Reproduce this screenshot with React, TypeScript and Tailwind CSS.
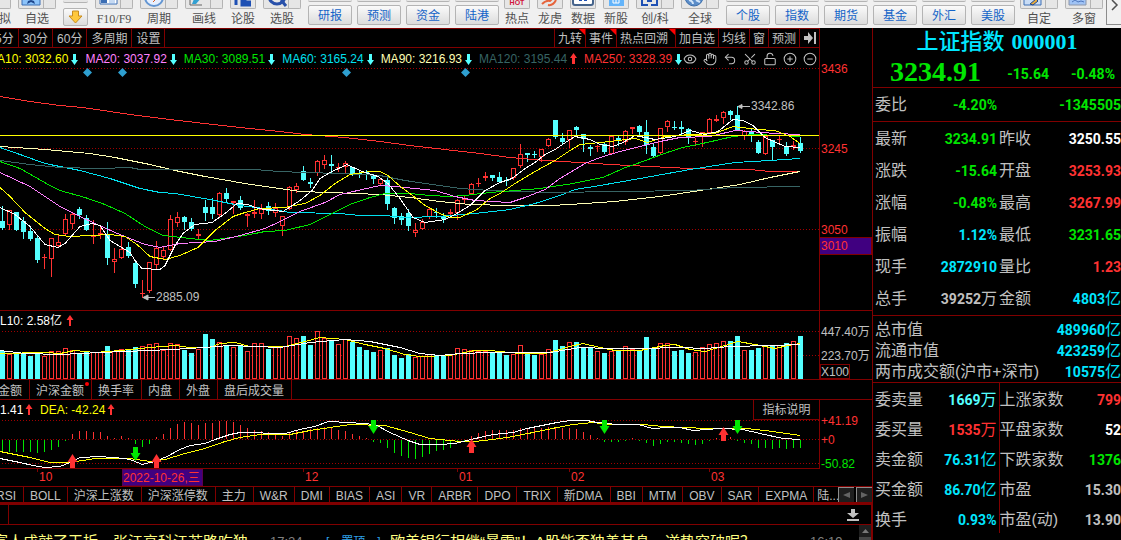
import React from 'react';
import { CircleMinus, CirclePlus, Eye, Hand, LockOpen, Scissors, Undo2 } from 'lucide-react';

const RED = '#ff3232';
const CYAN = '#54ffff';
const GREEN = '#00e600';
const LINE = '#800000';

// u = up (hollow red), d = down (solid cyan); then high, top, bottom, low
type Candle = ['u' | 'd', number, number, number, number];

const candles: Candle[] = [
  ['d', 206, 221, 228, 229], ['u', 210, 210, 225, 229], ['d', 212, 212, 230, 230], ['d', 217, 221, 232, 238],
  ['d', 226, 231, 239, 240], ['d', 236, 238, 260, 262], ['u', 254, 257, 258, 268], ['u', 238, 238, 259, 276],
  ['u', 234, 242, 246, 247], ['u', 214, 219, 234, 234], ['u', 212, 214, 224, 228], ['d', 207, 209, 215, 218],
  ['d', 215, 218, 230, 230], ['u', 220, 235, 237, 243], ['u', 225, 233, 235, 238], ['d', 222, 234, 258, 264],
  ['u', 248, 259, 262, 272], ['u', 237, 249, 258, 258], ['d', 242, 247, 256, 257], ['d', 260, 263, 284, 287],
  ['u', 280, 293, 294, 297], ['u', 262, 262, 291, 292], ['u', 241, 248, 265, 268], ['u', 247, 250, 257, 258],
  ['u', 215, 219, 250, 250], ['u', 212, 217, 223, 226], ['d', 216, 217, 222, 229], ['d', 218, 222, 229, 230],
  ['u', 229, 234, 236, 239], ['d', 200, 207, 213, 220], ['d', 198, 207, 214, 218], ['u', 192, 193, 215, 217],
  ['d', 188, 193, 199, 201], ['u', 201, 201, 203, 213], ['d', 196, 200, 208, 209], ['u', 213, 214, 216, 226],
  ['u', 200, 212, 214, 217], ['u', 204, 209, 214, 218], ['d', 202, 206, 211, 214], ['u', 203, 208, 213, 216],
  ['u', 216, 216, 226, 235], ['u', 186, 187, 209, 209], ['u', 183, 186, 190, 192], ['d', 166, 171, 180, 180],
  ['d', 178, 182, 184, 187], ['u', 160, 161, 173, 175], ['u', 155, 160, 165, 168], ['d', 155, 164, 166, 172],
  ['u', 163, 167, 168, 171], ['u', 161, 163, 167, 173], ['d', 167, 167, 175, 175], ['d', 171, 173, 174, 177],
  ['d', 170, 172, 173, 179], ['d', 174, 175, 179, 183], ['u', 178, 179, 184, 185], ['d', 178, 180, 204, 209],
  ['d', 207, 208, 218, 223], ['d', 213, 216, 220, 224], ['d', 209, 213, 226, 230], ['u', 223, 230, 233, 236],
  ['u', 219, 222, 229, 229], ['u', 208, 209, 217, 218], ['d', 208, 212, 213, 217], ['d', 213, 217, 219, 222],
  ['u', 209, 212, 214, 215], ['u', 199, 200, 213, 219], ['u', 196, 198, 200, 203], ['u', 183, 184, 194, 194],
  ['u', 178, 183, 184, 186], ['u', 172, 176, 178, 180], ['d', 175, 175, 178, 180], ['d', 172, 177, 182, 182],
  ['d', 177, 180, 181, 185], ['u', 168, 168, 178, 179], ['u', 144, 154, 166, 167], ['d', 153, 153, 155, 161],
  ['d', 151, 154, 155, 157], ['u', 149, 149, 157, 161], ['u', 138, 139, 146, 146], ['d', 120, 120, 137, 138],
  ['d', 133, 138, 142, 144], ['u', 130, 130, 140, 147], ['d', 126, 127, 130, 135], ['d', 134, 134, 139, 151],
  ['d', 145, 147, 149, 155], ['u', 145, 146, 147, 151], ['d', 143, 144, 152, 153], ['u', 136, 136, 154, 154],
  ['d', 136, 138, 140, 145], ['u', 130, 131, 142, 144], ['u', 127, 127, 129, 133], ['d', 125, 126, 132, 135],
  ['d', 120, 132, 145, 153], ['d', 143, 147, 156, 156], ['u', 128, 128, 153, 154], ['u', 120, 121, 127, 131],
  ['d', 121, 127, 128, 129], ['d', 121, 127, 129, 134], ['d', 128, 129, 138, 143], ['u', 138, 141, 142, 145],
  ['u', 132, 132, 137, 146], ['u', 118, 119, 133, 133], ['u', 115, 119, 121, 121], ['u', 111, 112, 118, 123],
  ['d', 110, 111, 115, 119], ['d', 106, 115, 130, 130], ['u', 130, 131, 136, 139], ['d', 128, 131, 134, 141],
  ['d', 140, 142, 153, 153], ['u', 136, 136, 154, 154], ['d', 140, 140, 147, 159], ['u', 136, 139, 140, 144],
  ['d', 142, 147, 154, 155], ['u', 141, 145, 147, 149], ['d', 137, 143, 151, 152],
];

const volumes = [
  28, 25, 26, 26, 23, 27, 23, 28, 28, 31, 29, 26, 27, 27, 27, 33, 28, 30, 29, 32, 33, 35, 36, 29, 36, 35, 29, 26, 30, 45,
  40, 37, 33, 32, 34, 28, 36, 36, 30, 33, 33, 43, 41, 43, 34, 48, 41, 39, 35, 40, 37, 32, 29, 27, 29, 31, 24, 21, 25, 22,
  23, 25, 24, 23, 24, 31, 30, 29, 28, 28, 27, 27, 24, 25, 34, 25, 24, 25, 30, 39, 33, 37, 37, 31, 31, 28, 26, 28, 29, 33,
  30, 29, 42, 30, 36, 36, 28, 29, 26, 27, 32, 35, 36, 38, 38, 43, 29, 29, 31, 33, 34, 34, 36, 38, 43,
];

const macd = [
  -13, -12, -12, -12, -12, -13, -12, -10, -7, 0, 5, 8, 8, 7, 7, 3, 1, 3, 1, -4, -7, -4, 2, 5, 11, 15, 17, 16, 14, 16,
  16, 18, 18, 17, 14, 11, 9, 8, 7, 4, 3, 6, 8, 8, 10, 11, 12, 12, 9, 8, 5, 3, 1, -2, -3, -8, -13, -16, -18, -19,
  -17, -14, -11, -10, -8, -3, 0, 3, 6, 8, 9, 9, 9, 9, 11, 11, 11, 11, 12, 11, 11, 11, 10, 7, 4, 1, -2, -2, -2, 0,
  1, 0, -3, -6, -4, -2, -2, -3, -4, -5, -4, 0, 1, 2, 2, 0, -3, -4, -8, -8, -9, -8, -9, -8, -8,
];

const averages = [
  { color: '#ff3232', points: '0,96 30,101 60,105 83,107 130,114 170,119 213,124 250,128 280,131 305,134 345,137 380,141 410,145 445,149 480,153 510,157 545,160 580,162 610,164 650,166 690,168 720,169 750,169 770,171 800,171' },
  { color: '#ffffb4', points: '0,146 45,149 90,153 115,157 150,164 175,170 205,176 245,183 279,188 300,191 330,192 380,194 410,197 440,201 470,204 510,205 550,205 570,204 615,201 660,196 700,190 740,184 770,177 800,171' },
  { color: '#00e1f0', points: '0,147 20,154 45,163 65,167 80,170 110,178 140,188 160,192 175,193 210,199 240,205 279,210 290,212 340,213 360,215 385,215 405,217 440,216 475,213 510,209 535,203 560,195 575,189 600,185 640,178 690,169 735,162 770,160 800,158' },
  { color: '#376464', points: '0,160 30,164 60,167 100,168 130,167 140,169 255,169 279,171 305,172 340,173 380,175 405,180 460,188 490,190 550,192 620,191 690,190 735,187 800,186' },
  { color: '#00e600', points: '0,161 20,168 50,185 60,190 85,197 105,204 125,213 145,226 163,235 190,238 210,240 245,235 265,231 285,230 310,224 330,214 350,204 370,197 385,193 410,193 430,195 450,196 465,195 490,192 540,188 573,183 603,177 623,168 640,162 667,152 683,147 707,142 733,136 753,134 780,135 800,136' },
  { color: '#ff80ff', points: '0,172 30,186 60,206 80,216 95,223 115,232 135,240 145,244 160,247 180,243 215,241 240,235 265,228 280,221 300,211 325,202 340,194 380,185 395,186 435,190 455,196 475,200 510,202 525,197 545,189 560,178 585,163 600,157 620,151 640,146 660,141 680,137 710,136 735,130 750,131 775,133 800,134' },
  { color: '#ffff00', points: '0,187 10,196 25,212 45,228 55,234 70,236 110,234 125,236 137,244 150,256 165,259 180,255 198,247 215,230 233,216 245,212 260,208 285,207 305,203 320,195 335,183 350,174 370,171 380,171 388,175 398,184 410,193 425,205 440,213 450,217 460,217 477,209 490,198 500,193 515,183 535,171 555,160 570,150 580,144 610,141 635,138 648,142 665,136 690,134 715,133 733,126 750,128 757,129 775,130 790,136 800,143' },
  { color: '#ffffff', points: '0,207 15,214 30,226 45,244 58,247 65,243 80,226 92,223 100,225 110,240 120,246 130,252 135,260 142,268 160,269 165,265 175,245 183,233 195,224 212,222 225,213 237,203 248,204 258,208 283,211 300,200 312,190 320,178 330,172 347,164 362,171 378,176 388,183 400,198 413,217 425,222 445,219 455,214 470,205 485,190 500,182 512,178 525,168 535,162 545,154 555,149 570,139 575,136 590,139 600,144 613,146 623,142 635,135 655,139 675,136 690,130 705,134 718,131 733,119 743,120 753,125 765,137 785,146 800,147' },
];

const volumeAverages = [
  { color: '#ffff00', points: '0,353 45,352 60,353 75,350 95,352 120,350 150,347 175,345 190,347 210,347 220,343 235,342 250,346 285,346 305,341 320,337 345,339 365,344 385,348 405,354 420,356 450,355 475,350 490,350 520,353 545,353 560,349 570,346 583,343 600,347 615,350 640,350 665,345 675,344 690,349 705,351 725,345 738,341 755,344 775,348 788,345 800,343' },
  { color: '#ffffff', points: '0,350 25,353 60,354 100,352 150,350 190,348 230,345 280,347 310,342 345,339 370,341 400,347 420,353 440,355 460,353 490,352 550,352 580,347 610,348 640,348 680,347 705,348 730,346 770,345 800,344' },
];

const macdLines = [
  { color: '#ffff00', points: '0,451 30,457 50,462 70,462 95,458 130,458 150,461 165,459 185,453 205,448 225,441 240,437 260,434 290,434 310,430 350,424 385,425 410,432 430,438 460,441 475,441 493,439 513,436 533,432 557,427 573,424 593,422 610,424 643,424 663,426 707,428 747,428 773,431 800,435' },
  { color: '#ffffff', points: '0,458 20,462 33,465 45,467 60,466 70,462 80,457 100,456 125,458 133,460 142,464 155,461 167,456 180,449 190,445 205,443 215,439 230,434 240,432 285,433 300,429 315,426 328,421 350,422 375,424 390,432 408,440 420,444 440,444 455,443 471,439 493,434 513,432 527,428 547,424 557,422 570,420 587,420 597,422 617,424 638,424 653,428 667,427 680,427 693,430 720,428 743,429 760,433 783,438 800,439' },
];

const legend = [
  { label: 'MA10: 3032.60', tone: 'text-[#ffff00]', up: false },
  { label: 'MA20: 3037.92', tone: 'text-[#ff80ff]', up: false },
  { label: 'MA30: 3089.51', tone: 'text-[#00e600]', up: false },
  { label: 'MA60: 3165.24', tone: 'text-[#00e1f0]', up: false },
  { label: 'MA90: 3216.93', tone: 'text-[#ffffb4]', up: false },
  { label: 'MA120: 3195.44', tone: 'text-[#376464]', up: true },
  { label: 'MA250: 3328.39', tone: 'text-[#ff3232]', up: false },
];

const indicators = [
  'BOLL', '沪深上涨数', '沪深涨停数', '主力', 'W&R', 'DMI', 'BIAS', 'ASI', 'VR', 'ARBR', 'DPO', 'TRIX', '新DMA', 'BBI',
  'MTM', 'OBV', 'SAR', 'EXPMA',
];

const green = 'text-[#00e600]';
const red = 'text-[#ff3232]';
const cyan = 'text-[#00e6ff]';
const gray = 'text-[#c0c0c0]';

const quoteRows = [
  ['最新', '3234.91', green, '昨收', '3250.55', 'text-white'],
  ['涨跌', '-15.64', green, '开盘', '3253.93', red],
  ['涨幅', '-0.48%', green, '最高', '3267.99', red],
  ['振幅', '1.12%', cyan, '最低', '3231.65', green],
  ['现手', '2872910', cyan, '量比', '1.23', red],
  ['总手', '39252万', gray, '金额', '4803亿', cyan],
];

const marketRows = [
  ['总市值', '489960亿'],
  ['流通市值', '423259亿'],
  ['两市成交额(沪市+深市)', '10575亿'],
];

const breadthRows = [
  ['委卖量', '1669万', 'text-[#54ffff]', '上涨家数', '799', red],
  ['委买量', '1535万', red, '平盘家数', '52', 'text-white'],
  ['卖金额', '76.31亿', cyan, '下跌家数', '1376', green],
  ['买金额', '86.70亿', cyan, '市盈', '15.30', gray],
  ['换手', '0.93%', cyan, '市盈(动)', '13.90', gray],
];

const candleX = (i: number) => 2 + i * 7;

function Arrow({ up }: { up: boolean }) {
  return (
    <svg width="7" height="12" viewBox="0 0 7 12" className="shrink-0">
      {up ? <path d="M3.500 0 7 5H5v6H2V5H0z" fill={RED} /> : <path d="M3.500 12 0 7h2V1h3v6h2z" fill={CYAN} />}
    </svg>
  );
}

function Dotted({ y }: { y: number }) {
  return <path d={`M2 ${y + 0.5}H819`} stroke="#a00000" strokeDasharray="1 2" />;
}

function Lines({ items }: { items: { color: string; points: string }[] }) {
  return (
    <g fill="none" transform="translate(0 .5)" shapeRendering="crispEdges">
      {items.map((line) => (
        <polyline key={line.color} points={line.points} stroke={line.color} />
      ))}
    </g>
  );
}

function PriceChart() {
  return (
    <svg viewBox="0 67 872 243" className="block h-auto w-full overflow-visible" fontSize="12">
      <g shapeRendering="crispEdges">
        <Dotted y={68} />
        <Dotted y={148} />
        <Dotted y={229} />
        <path d="M819.500 67V310" stroke={LINE} />
        {candles.map(([dir, high, top, bottom, low], i) => {
          const x = candleX(i);
          const h = bottom - top;
          if (dir === 'd') {
            return (
              <g key={i} fill={CYAN}>
                <rect x={x} y={high} width="1" height={low - high + 1} />
                <rect x={x - 2} y={top} width="5" height={h} />
              </g>
            );
          }
          return (
            <g key={i} fill={RED}>
              <rect x={x} y={high} width="1" height={top - high} />
              <rect x={x} y={bottom} width="1" height={low - bottom + 1} />
              {h < 3 ? (
                <rect x={x - 2} y={top} width="5" height={h} />
              ) : (
                <rect x={x - 1.5} y={top + 0.5} width="4" height={h - 1} fill="#000" stroke={RED} />
              )}
            </g>
          );
        })}
      </g>
      <Lines items={averages} />
      <g shapeRendering="crispEdges">
        <rect x="0" y="135" width="819" height="1" fill="#ffff00" />
        <rect x="819.500" y="237.500" width="52" height="17" fill="#400080" stroke={LINE} />
      </g>
      {[87, 122, 346, 465].map((x) => (
        <path key={x} d={`M${x + 0.5} 68l4.500 4.500-4.500 4.500-4.500-4.500z`} fill="#2e9fd0" />
      ))}
      <g stroke="#c0c0c0" fill="#c0c0c0">
        <path d="M144 297.500H155M148 295l-5 2.500 5 2.500z" />
        <path d="M739 106.500H750M742 104.500l-4 2 4 2z" />
      </g>
      <g fill="#c0c0c0">
        <text x="156" y="301">2885.09</text>
        <text x="751" y="110">3342.86</text>
      </g>
      <g fill={RED}>
        <text x="821" y="73">3436</text>
        <text x="821" y="153">3245</text>
        <text x="821" y="234">3050</text>
        <text x="821" y="250">3010</text>
      </g>
    </svg>
  );
}

function VolumeChart() {
  return (
    <svg viewBox="0 311 872 68" className="block h-auto w-full" fontSize="12">
      <g shapeRendering="crispEdges">
        <Dotted y={331} />
        <Dotted y={355} />
        <path d="M819.500 311V379" stroke={LINE} />
        {volumes.map((v, i) =>
          candles[i][0] === 'd' ? (
            <rect key={i} x={candleX(i) - 2} y={379 - v} width="5" height={v} fill={CYAN} />
          ) : (
            <rect key={i} x={candleX(i) - 1.5} y={379.5 - v} width="4" height={v - 1} fill="#000" stroke={RED} />
          ),
        )}
        <rect x="820.500" y="364.500" width="29" height="14" fill="none" stroke={LINE} />
      </g>
      <Lines items={volumeAverages} />
      <text x="0" y="325" fill="#fff">L10: 2.58亿</text>
      <path d="M70 315l3.500 5H71v6H69v-6H66.500z" fill={RED} />
      <g fill="#c0c0c0">
        <text x="821" y="336">447.40万</text>
        <text x="821" y="360">223.70万</text>
        <text x="821" y="376">X100</text>
      </g>
    </svg>
  );
}

function MacdChart() {
  const ups = [[72, 454], [156, 454], [471, 439], [723, 427]];
  const downs = [[135, 447], [373, 420], [604, 420], [737, 420]];
  const months: [number, string][] = [[37, '10'], [303, '12'], [457, '01'], [569, '02'], [709, '03']];

  return (
    <svg viewBox="0 400 872 86" className="block h-auto w-full" fontSize="12">
      <g shapeRendering="crispEdges">
        <Dotted y={420} />
        <Dotted y={439} />
        <Dotted y={463} />
        <path d="M819.500 400V468.500H0" fill="none" stroke={LINE} />
        {macd.map((v, i) => (
          <rect
            key={i}
            x={candleX(i)}
            y={v > 0 ? 439 - v : 440}
            width="1"
            height={Math.max(Math.abs(v), 1)}
            fill={v > 0 ? RED : GREEN}
          />
        ))}
        {months.map(([x]) => (
          <rect key={x} x={x} y="469" width="1" height="3" fill={LINE} />
        ))}
        <rect x="122.500" y="469.500" width="80" height="16" fill="#400080" stroke="#5a0050" />
      </g>
      <Lines items={macdLines} />
      {ups.map(([x, y]) => (
        <path key={x} d={`M${x + 0.5} ${y}l5 8h-2.500v6h-5v-6h-2.500z`} fill={RED} />
      ))}
      {downs.map(([x, y]) => (
        <path key={x} d={`M${x + 0.5} ${y + 14}l5-8h-2.500v-6h-5v6h-2.500z`} fill={GREEN} />
      ))}
      <text x="0" y="414" fill="#fff">1.41</text>
      <path d="M29 404l3.500 5H30v6H28v-6H25.500z" fill={RED} />
      <text x="40" y="414" fill="#ffff00">DEA: -42.24</text>
      <path d="M111 404l3.500 5H112v6H110v-6H107.500z" fill={RED} />
      <g fill={RED}>
        {months.map(([x, label]) => (
          <text key={x} x={x + 2} y="481">{label}</text>
        ))}
        <text x="123" y="482">2022-10-26,三</text>
        <text x="821" y="425">+41.19</text>
        <text x="821" y="444">+0</text>
      </g>
      <text x="821" y="468" fill={GREEN}>-50.82</text>
    </svg>
  );
}

interface ToolProps {
  label: string;
  split?: boolean;
  className?: string;
  children?: React.ReactNode;
}

function Tool({ label, split, className = '', children }: ToolProps) {
  return (
    <button className={`flex shrink-0 flex-col items-center ${split ? 'w-[38px]' : 'w-[26px]'} ${className}`}>
      <span className="flex h-[9px] w-full rounded-b-xs border border-t-0 border-[#b4b4b4] bg-[#e6e6e6]">
        <svg width="24" height="8" viewBox="0 0 24 8" className="shrink-0">{children}</svg>
        {split && <span className="flex-1 border-l border-[#b4b4b4]" />}
      </span>
      <span className="h-[19px] whitespace-nowrap text-xs leading-[21px] text-[#505050]">{label}</span>
    </button>
  );
}

function LinkGroup({ labels }: { labels: string[] }) {
  return (
    <div className="-mr-0.5 flex shrink-0 gap-[5px]">
      {labels.map((label) => (
        <div key={label} className="flex w-11 flex-col gap-[3px]">
          <span className="h-0.5 rounded-b-xs border-b border-[#b4b4b4] bg-[#e6e6e6]" />
          <button className="mb-[3px] h-5 rounded-xs border border-[#b4b4b4] bg-gradient-to-b from-[#fafafa] to-[#dcdcdc] pt-px text-xs text-[#1464c8]">
            {label}
          </button>
        </div>
      ))}
    </div>
  );
}

function Toolbar() {
  return (
    <header className="flex h-7 items-end gap-[7px] overflow-hidden bg-[#f0f0f0]">
      <Tool label="拟" split className="-ml-[27px] items-end">
        <path d="M17 0l6 6" stroke="#a0522d" strokeWidth="3" />
      </Tool>
      <Tool label="自选" split>
        <path d="M3 0v5h18V0" fill="#8cc3fa" stroke="#3c6eb4" />
        <path d="M8 4l1-3 3-1 3 1 1 3-4-2z" fill="#1e468c" />
      </Tool>
      <div className="flex w-[25px] shrink-0 flex-col gap-[5px]">
        <span className="h-[3px] rounded-b-xs border-b border-[#b4b4b4] bg-[#e6e6e6]" />
        <button aria-label="下移" className="mb-0.5 flex h-[18px] items-center justify-center rounded-xs border border-[#b4b4b4] bg-gradient-to-b from-[#fafafa] to-[#dcdcdc]">
          <svg width="15" height="14" viewBox="0 0 15 14">
            <path d="M4.500 1h6v5H14L7.500 13 1 6h3.500z" fill="#ffc83c" stroke="#c88c1e" />
          </svg>
        </button>
      </div>
      <Tool label="F10/F9" split className="font-['Liberation_Serif','Noto_Sans_CJK_SC',serif]">
        <path d="M4 0v4h17V0" fill="#fff" stroke="#3c6eb4" />
        <path d="M5 0h6v3H5z" fill="#3c6eb4" />
        <path d="M13 1h6M13 3h6" stroke="#8cb4e6" />
      </Tool>
      <Tool label="周期" split>
        <circle cx="13" cy="-3" r="9" fill="#e6f0ff" stroke="#6496d2" strokeWidth="2" />
        <path d="M12 2l4-4" stroke="#dc5a1e" />
      </Tool>
      <Tool label="画线" split>
        <path d="M4 0v5h12" fill="none" stroke="#646464" />
        <path d="M6 4l2-5 8-2-6 7z" fill="#32a0d2" />
      </Tool>
      <Tool label="论股">
        <path d="M5 0v5M11 0v5h9M14 0v2h6" fill="none" stroke="#1e50b4" strokeWidth="3" />
      </Tool>
      <Tool label="选股" split>
        <circle cx="13" cy="-4" r="8" fill="none" stroke="#2850aa" strokeWidth="3" />
        <path d="M17 0l5 6" stroke="#2850aa" strokeWidth="3" />
      </Tool>
      <LinkGroup labels={['研报', '预测', '资金', '陆港']} />
      <Tool label="热点">
        <text x="12" y="5" textAnchor="middle" fontSize="7" fontWeight="700" fill="#d2143c">HOT</text>
      </Tool>
      <Tool label="龙虎">
        <path d="M4 4q4-4 8-3l2-2M10 5q5 1 8-5" fill="none" stroke="#e6643c" strokeWidth="2" />
      </Tool>
      <Tool label="数据">
        <rect x="2" y="-4" width="20" height="9" rx="2" fill="#fff" stroke="#46648c" strokeWidth="2" />
        <path d="M8 0h3M13 0h3" stroke="#1e50b4" strokeWidth="2" />
      </Tool>
      <Tool label="新股">
        <path d="M5 0h15v6H5z" fill="#64b4fa" />
        <path d="M9 0v3h6V0M12 0v3" fill="none" stroke="#fff" />
      </Tool>
      <Tool label="创/科" split>
        <path d="M5 0v5h6M14 5h6V0M11 0v1h4" fill="none" stroke="#1e50b4" strokeWidth="2" />
      </Tool>
      <Tool label="全球" split>
        <circle cx="12" cy="-3" r="9" fill="#5a8cc8" stroke="#3c6eaa" />
        <path d="M7 0q4 1 4 4M14 0l4 2" fill="none" stroke="#d2e6fa" strokeWidth="2" />
      </Tool>
      <LinkGroup labels={['个股', '指数', '期货', '基金', '外汇', '美股']} />
      <Tool label="自定" split>
        <path d="M3 0v5h17V0" fill="#c8dcf5" stroke="#3c6eb4" />
        <path d="M9 4l6-5 2 2-5 4z" fill="#e6aa3c" stroke="#1e468c" />
      </Tool>
      <Tool label="多窗" split>
        <path d="M3 0v5h17V0" fill="#a0c3f5" stroke="#8c96aa" />
        <path d="M6 2l3-2 3 2 3-1 3 1" fill="none" stroke="#5078be" />
      </Tool>
      <button aria-label="更多" className="-ml-1 mb-[3px] flex h-10 w-[18px] shrink-0 items-center border-b border-l border-[#8c8c8c] pl-1">
        <svg width="8" height="12" viewBox="0 0 8 12">
          <path d="M1 1l5 5-5 5" fill="none" stroke="#505050" strokeWidth="1.500" />
        </svg>
      </button>
    </header>
  );
}

function PeriodTabs() {
  const left = ['5分', '30分', '60分', '多周期', '设置'];
  const right = ['九转', '事件', '热点回溯', '加自选', '均线', '窗', '预测'];

  return (
    <div className="flex h-5 justify-between overflow-hidden border-y border-[#800000] leading-4">
      <div className="-ml-[9px] flex">
        {left.map((label) => (
          <button key={label} className="whitespace-nowrap border-r border-[#800000] px-1 pt-0.5">{label}</button>
        ))}
      </div>
      <div className="flex">
        {right.map((label, i) => (
          <button
            key={label}
            className={`relative whitespace-nowrap border-l border-[#800000] pl-[3px] pt-0.5 ${label === '热点回溯' ? 'pr-[7px]' : 'pr-[3px]'}`}
          >
            {label}
            {i < 3 && (
              <svg width="6" height="6" className="absolute right-0 top-0">
                <path d="M0 0h6v6z" fill="#ff0000" />
              </svg>
            )}
          </button>
        ))}
        <button aria-label="跳到最新" className="flex w-5 items-center justify-center border-l border-[#800000]">
          <svg width="12" height="12" viewBox="0 0 12 12">
            <path d="M0 4h4V0l5 6-5 6V8H0zM10 0h2v12h-2z" fill="#c0c0c0" />
          </svg>
        </button>
      </div>
    </div>
  );
}

function Legend() {
  return (
    <div className="flex h-[19px] items-center overflow-hidden pt-0.5">
      <div className="-ml-[13px] flex gap-[7px]">
        {legend.map((item) => (
          <span key={item.label} className={`flex shrink-0 items-center gap-[3px] whitespace-nowrap ${item.tone}`}>
            {item.label}
            <Arrow up={item.up} />
          </span>
        ))}
      </div>
      <div className="ml-auto flex shrink-0 gap-1.5 pr-0.5 text-[#c0c0c0]">
        <button aria-label="显示"><Eye size={14} strokeWidth={1.75} /></button>
        <button aria-label="拖动"><Hand size={14} strokeWidth={1.75} /></button>
        <button aria-label="撤销"><Undo2 size={14} strokeWidth={1.75} /></button>
        <button aria-label="剪切"><Scissors size={14} strokeWidth={1.75} className="-rotate-90" /></button>
        <button aria-label="锁定"><LockOpen size={14} strokeWidth={1.75} /></button>
        <button aria-label="放大"><CirclePlus size={14} strokeWidth={1.75} /></button>
        <button aria-label="缩小"><CircleMinus size={14} strokeWidth={1.75} /></button>
      </div>
    </div>
  );
}

function VolumeTabs() {
  return (
    <div className="flex h-5 overflow-hidden border-b border-[#800000] leading-4">
      {['金额', '沪深金额', '换手率', '内盘', '外盘', '盘后成交量'].map((label, i) => (
        <button
          key={label}
          className={`relative shrink-0 border-r border-[#800000] pl-1.5 pr-[7px] pt-[3px] ${i === 0 ? '-ml-2' : ''}`}
        >
          {label}
          {label === '沪深金额' && <span className="absolute right-0.5 top-0.5 size-1 rounded-full bg-[#ff0000]" />}
        </button>
      ))}
    </div>
  );
}

function IndicatorTabs() {
  return (
    <div className="flex h-[19px] overflow-hidden border-b-[3px] border-t border-[#800000] leading-3">
      <button className="-ml-2.5 shrink-0 border-r border-[#800000] pl-1.5 pr-[7px] pt-[3px]">RSI</button>
      {indicators.map((label) => (
        <button
          key={label}
          className={`shrink-0 whitespace-nowrap border-r border-[#800000] pl-1.5 pt-[3px] ${/^[A-Z&]+$/.test(label) ? 'pr-1.5' : 'pr-[7px]'}`}
        >
          {label}
        </button>
      ))}
      <button className="min-w-0 flex-1 overflow-hidden whitespace-nowrap pl-[3px] pt-[3px] text-left">陆...</button>
      <div className="flex shrink-0 gap-0.5">
        <button aria-label="向左" className="flex w-4 items-center justify-center border-l border-t border-[#8c8c8c] bg-[#1e1e1e]">
          <svg width="7" height="6"><path d="M7 0v6L0 3z" fill="#646464" /></svg>
        </button>
        <button aria-label="向右" className="flex w-4 items-center justify-center border-l border-t border-[#8c8c8c] bg-[#1e1e1e]">
          <svg width="7" height="6"><path d="M0 0v6l7-3z" fill="#646464" /></svg>
        </button>
      </div>
    </div>
  );
}

function News() {
  return (
    <section className="min-h-0 flex-1 overflow-hidden border-r border-[#800000]">
      <div className="flex h-5 items-center justify-between border-b border-[#800000] pr-3">
        <span className="h-full w-[9px] border-r border-[#800000]" />
        <button aria-label="收起">
          <svg width="12" height="12" viewBox="0 0 12 12">
            <path d="M4 0h4v4h4L6 9 0 4h4zM0 10h12v2H0z" fill="#c0c0c0" />
          </svg>
        </button>
      </div>
      <div className="flex h-8 justify-between overflow-hidden">
        <div className="flex items-start whitespace-nowrap pt-[7px] text-[15px] leading-5 text-[#ffff80]">
          <a href="#news-1" className="-ml-[7px] w-[255px]">富人成就了天拆，张江高科江苏路吃独</a>
          <time className="ml-[22px] w-14 text-[13px] text-[#808080]">17:24</time>
          <span className="w-16 text-xs leading-5 text-[#2e9fe6]">[　置顶　]</span>
          <a href="#news-2" className="w-[420px]">欧美银行相继“暴雷”！A股能否独善其身，逆势突破呢？</a>
          <time className="text-[13px] text-[#808080]">16:19</time>
        </div>
        <div className="w-3 shrink-0 bg-[#464646]">
          <button aria-label="向上滚动" className="flex h-3 w-full items-center justify-center bg-[#1e1e1e]">
            <svg width="7" height="4"><path d="M3.500 0 7 4H0z" fill="#787878" /></svg>
          </button>
        </div>
      </div>
    </section>
  );
}

// digits are bold, the trailing unit (万 / 亿) keeps the label weight
function Value({ text }: { text: string }) {
  const unit = text.match(/[万亿]$/)?.[0];
  return (
    <>
      <b className="font-['Roboto','Liberation_Sans',sans-serif] text-sm font-bold">{unit ? text.slice(0, -1) : text}</b>
      {unit}
    </>
  );
}

function PairTable({ rows, rowClass, divided }: { rows: string[][]; rowClass: string; divided?: boolean }) {
  return (
    <table className="w-full table-fixed">
      <tbody>
        {rows.map(([nameA, valueA, toneA, nameB, valueB, toneB]) => (
          <tr key={nameA} className={rowClass}>
            <th scope="row" className="w-[56px] whitespace-nowrap p-0 pl-0.5 text-left font-normal">{nameA}</th>
            <td className={`w-[70px] whitespace-nowrap p-0 pr-0.5 text-right ${toneA} ${divided ? 'border-r border-[#800000]' : ''}`}>
              <Value text={valueA} />
            </td>
            <th scope="row" className="w-[68px] whitespace-nowrap p-0 text-left font-normal">{nameB}</th>
            <td className={`whitespace-nowrap p-0 text-right ${toneB}`}>
              <Value text={valueB} />
            </td>
          </tr>
        ))}
      </tbody>
    </table>
  );
}

function QuotePanel() {
  return (
    <aside className="w-[249px] shrink-0 overflow-hidden border-l border-[#800000] text-base leading-5 text-[#c0c0c0]">
      <div className="h-[60px] border-b border-[#800000]">
        <h1 className="flex h-[27px] items-center justify-center gap-[7px] whitespace-nowrap text-[22px] font-medium text-[#00e6ff]">
          上证指数
          <span className="font-['Liberation_Serif',serif] font-bold">000001</span>
        </h1>
        <div className="flex h-8 items-center justify-between pl-[17px] pr-1.5 text-[#00e600]">
          <span className="pt-0.5 font-['Liberation_Serif',serif] text-[28px] font-bold">3234.91</span>
          <span className="flex gap-[22px] pt-1.5">
            <Value text="-15.64" />
            <Value text="-0.48%" />
          </span>
        </div>
      </div>
      <div className="flex h-[34px] items-center border-b border-[#800000] pl-0.5">
        <span>委比</span>
        <span className="w-[90px] text-right text-[#00e600]"><Value text="-4.20%" /></span>
        <span className="flex-1 text-right text-[#00e600]"><Value text="-1345505" /></span>
      </div>
      <div className="border-b border-[#800000] pt-px">
        <PairTable rows={quoteRows} rowClass="h-[32px]" />
      </div>
      <div className="border-b border-[#800000] pt-[3px]">
        <table className="w-full">
          <tbody>
            {marketRows.map(([name, value]) => (
              <tr key={name} className="h-[21px]">
                <th scope="row" className="whitespace-nowrap p-0 pl-0.5 text-left font-normal">{name}</th>
                <td className="whitespace-nowrap p-0 text-right text-[#00e6ff]"><Value text={value} /></td>
              </tr>
            ))}
          </tbody>
        </table>
      </div>
      <PairTable rows={breadthRows} rowClass="h-[30px] [&>*]:pt-1" divided />
    </aside>
  );
}

export default function App() {
  return (
    <div className="flex h-screen flex-col overflow-hidden bg-black font-['Liberation_Sans','Noto_Sans_CJK_SC',sans-serif] text-xs text-[#c0c0c0]">
      <Toolbar />
      <div className="flex min-h-0 flex-1">
        <main className="flex min-w-0 flex-1 flex-col">
          <div className="mr-[52px] shrink-0 border-r border-[#800000]">
            <PeriodTabs />
            <Legend />
          </div>
          <div className="shrink-0">
            <PriceChart />
          </div>
          <div className="shrink-0 border-y border-[#800000]">
            <VolumeChart />
          </div>
          <div className="shrink-0">
            <VolumeTabs />
          </div>
          <div className="relative shrink-0">
            <MacdChart />
            <button className="absolute right-[52px] top-0 h-5 w-[67px] border-x border-b border-[#800000] bg-black">
              指标说明
            </button>
          </div>
          <div className="shrink-0">
            <IndicatorTabs />
          </div>
          <News />
        </main>
        <QuotePanel />
      </div>
    </div>
  );
}
